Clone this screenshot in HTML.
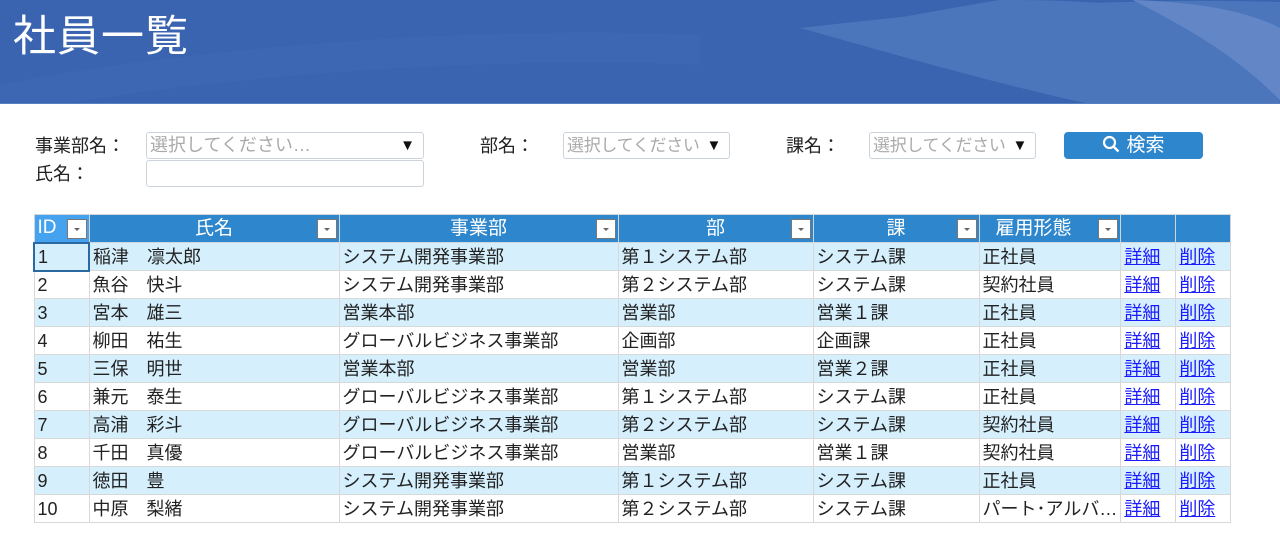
<!DOCTYPE html>
<html><head><meta charset="utf-8">
<style>
*{margin:0;padding:0;box-sizing:border-box}
body{width:1280px;height:550px;background:#fff;font-family:"Liberation Sans","Noto Sans CJK JP",sans-serif;position:relative;overflow:hidden;color:#222}
.hdr{position:absolute;left:0;top:0;width:1280px;height:104px;background:#3a64b0;overflow:hidden;border-bottom:1px solid #5a80c4}
.hdr h1{position:absolute;left:13px;top:12px;font-size:43px;font-weight:normal;color:#fff;line-height:50px;letter-spacing:1px}
.lbl{position:absolute;font-size:18px;line-height:26px;color:#222}
.box{position:absolute;border:1px solid #ccd3dc;border-radius:3px;background:#fff;height:27px;font-size:18px;line-height:25px;color:#aaa;padding-left:3px;white-space:nowrap;overflow:hidden}
.box.s{font-size:17px;letter-spacing:-0.3px}
.box .ar{position:absolute;right:8px;top:0;color:#111;font-size:15px;background:#fff;padding-left:4px}
.btn{position:absolute;left:1064px;top:132px;width:139px;height:27px;background:#2e86cc;border-radius:4px;color:#fff;font-size:19px;line-height:27px;text-align:center}
table{position:absolute;left:33px;top:214px;border-collapse:collapse;table-layout:fixed;font-size:18px}
td,th{border:1px solid #d8d8d8;height:28px;white-space:nowrap;overflow:hidden;padding:0 3px;line-height:26px;font-weight:normal;text-align:left}
th{background:#2e87cc;color:#fff;text-align:center;position:relative;border-color:#d0d6dc;height:28px;font-size:19px}
th .dd{position:absolute;right:2px;top:4px;width:20px;height:20px;background:#fff;border:1px solid #777}
th .dd:after{content:"";position:absolute;left:6px;top:8px;border-left:3px solid transparent;border-right:3px solid transparent;border-top:3px solid #666}
tr.a td{background:#d5effd}
td a{color:#1a1aff;text-decoration:underline}
</style></head><body>
<div class="hdr">
<svg width="1280" height="104" style="position:absolute;left:0;top:0">
<path d="M800 28 C1000 5 1120 -2 1280 2 L1280 104 L1090 104 C980 80 880 50 800 28Z" fill="#4c76bc"/>
<path d="M855 25 C960 70 1050 100 1100 104 L1280 104 L1280 40 C1200 10 1120 0 1000 0 C950 8 900 18 855 25Z" fill="#4c76bc"/>
<path d="M1133 0 C1200 2 1250 12 1280 28 L1280 100 C1230 50 1180 25 1133 0Z" fill="#6286c6"/>
<path d="M0 100 C200 60 500 40 700 50" stroke="#4470ba" stroke-width="30" fill="none" opacity=".3"/>
</svg>
<h1>社員一覧</h1></div>

<div class="lbl" style="left:35px;top:133px">事業部名：</div>
<div class="box" style="left:146px;top:132px;width:278px">選択してください…<span class="ar">▼</span></div>
<div class="lbl" style="left:35px;top:161px">氏名：</div>
<div class="box" style="left:146px;top:160px;width:278px"></div>
<div class="lbl" style="left:480px;top:133px">部名：</div>
<div class="box s" style="left:563px;top:132px;width:167px">選択してください<span class="ar">▼</span></div>
<div class="lbl" style="left:786px;top:133px">課名：</div>
<div class="box s" style="left:869px;top:132px;width:167px">選択してください<span class="ar">▼</span></div>
<div class="btn"><svg width="18" height="18" style="vertical-align:-2px;margin-right:6px"><circle cx="7.5" cy="7.5" r="5.5" stroke="#fff" stroke-width="2.2" fill="none"/><line x1="11.5" y1="11.5" x2="16.5" y2="16.5" stroke="#fff" stroke-width="2.4"/></svg>検索</div>

<table>
<colgroup><col style="width:55px"><col style="width:250px"><col style="width:279px"><col style="width:195px"><col style="width:166px"><col style="width:140px"><col style="width:55px"><col style="width:55px"></colgroup>
<tr><th style="background:#45a2ef;text-align:left">ID<span class="dd"></span></th><th>氏名<span class="dd"></span></th><th>事業部<span class="dd"></span></th><th>部<span class="dd"></span></th><th>課<span class="dd"></span></th><th style="text-align:left;padding-left:16px">雇用形態<span class="dd"></span></th><th></th><th></th></tr>
<tr class="a"><td style="border:2px solid #2a6aa0">1</td><td>稲津　凛太郎</td><td>システム開発事業部</td><td>第１システム部</td><td>システム課</td><td>正社員</td><td><a>詳細</a></td><td><a>削除</a></td></tr>
<tr><td>2</td><td>魚谷　快斗</td><td>システム開発事業部</td><td>第２システム部</td><td>システム課</td><td>契約社員</td><td><a>詳細</a></td><td><a>削除</a></td></tr>
<tr class="a"><td>3</td><td>宮本　雄三</td><td>営業本部</td><td>営業部</td><td>営業１課</td><td>正社員</td><td><a>詳細</a></td><td><a>削除</a></td></tr>
<tr><td>4</td><td>柳田　祐生</td><td>グローバルビジネス事業部</td><td>企画部</td><td>企画課</td><td>正社員</td><td><a>詳細</a></td><td><a>削除</a></td></tr>
<tr class="a"><td>5</td><td>三保　明世</td><td>営業本部</td><td>営業部</td><td>営業２課</td><td>正社員</td><td><a>詳細</a></td><td><a>削除</a></td></tr>
<tr><td>6</td><td>兼元　泰生</td><td>グローバルビジネス事業部</td><td>第１システム部</td><td>システム課</td><td>正社員</td><td><a>詳細</a></td><td><a>削除</a></td></tr>
<tr class="a"><td>7</td><td>高浦　彩斗</td><td>グローバルビジネス事業部</td><td>第２システム部</td><td>システム課</td><td>契約社員</td><td><a>詳細</a></td><td><a>削除</a></td></tr>
<tr><td>8</td><td>千田　真優</td><td>グローバルビジネス事業部</td><td>営業部</td><td>営業１課</td><td>契約社員</td><td><a>詳細</a></td><td><a>削除</a></td></tr>
<tr class="a"><td>9</td><td>徳田　豊</td><td>システム開発事業部</td><td>第１システム部</td><td>システム課</td><td>正社員</td><td><a>詳細</a></td><td><a>削除</a></td></tr>
<tr><td>10</td><td>中原　梨緒</td><td>システム開発事業部</td><td>第２システム部</td><td>システム課</td><td>パート･アルバ…</td><td><a>詳細</a></td><td><a>削除</a></td></tr>
</table>
</body></html>
